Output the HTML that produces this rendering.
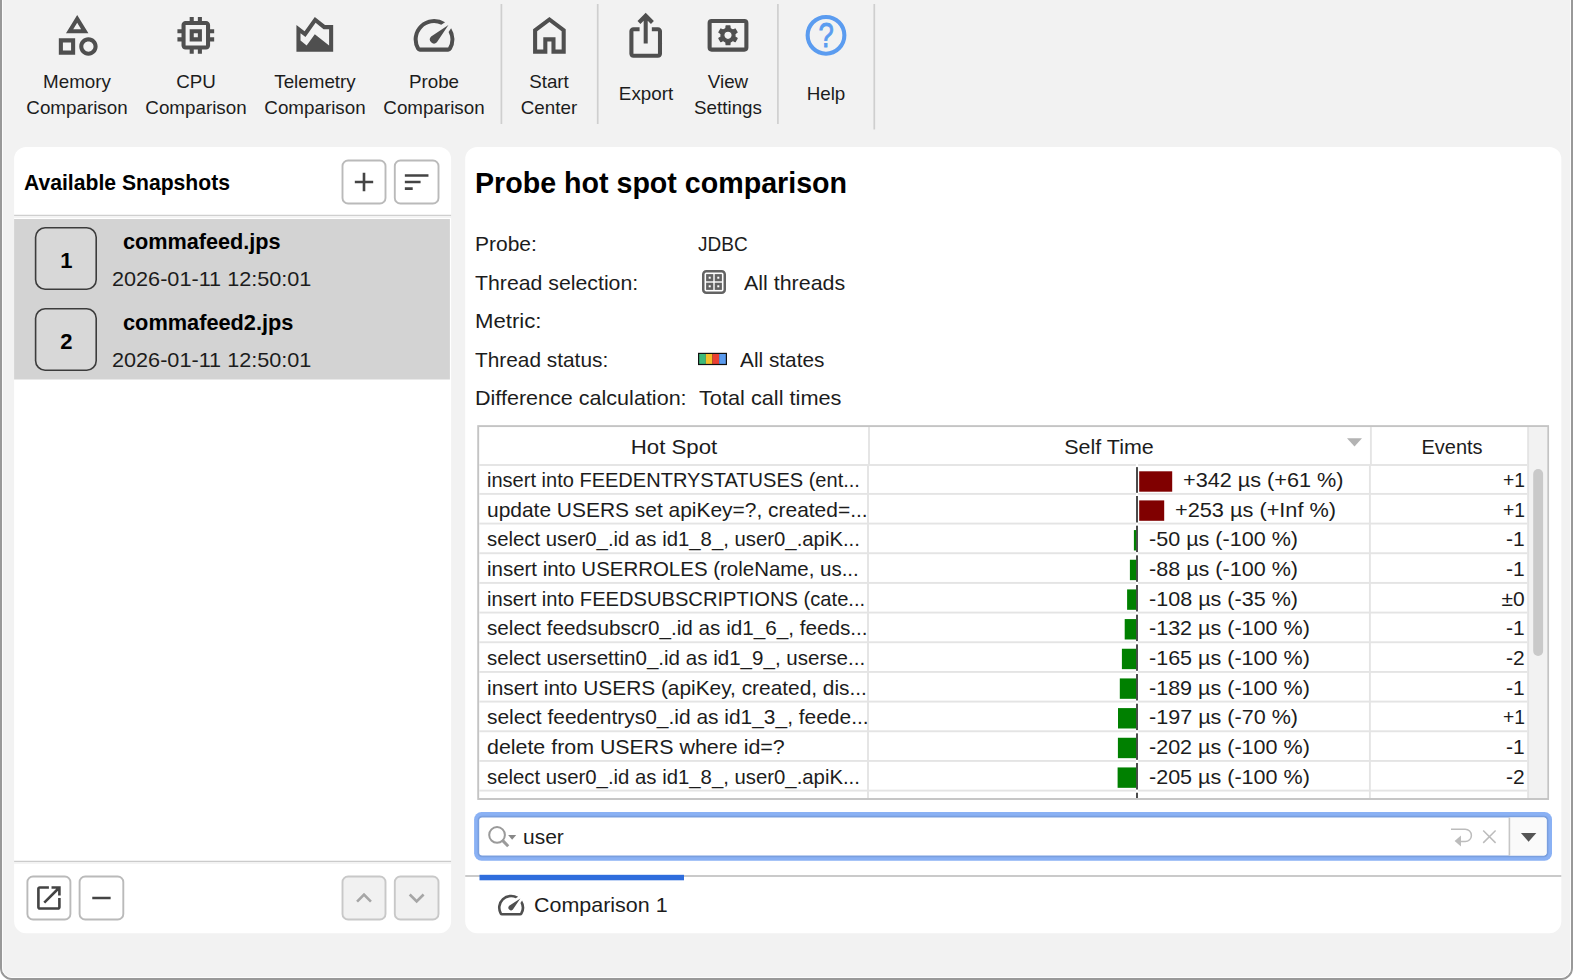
<!DOCTYPE html>
<html><head><meta charset="utf-8"><title>Probe hot spot comparison</title>
<style>
*{box-sizing:border-box;margin:0;padding:0}
html,body{width:1573px;height:980px;overflow:hidden;background:#fff}
body{font-family:"Liberation Sans",sans-serif;color:#1c1c1c;position:relative}
#g{position:absolute;left:0;top:0}
.t{position:absolute;white-space:nowrap;line-height:1}
</style></head><body>
<svg id="g" width="1573" height="980" viewBox="0 0 1573 980">
<rect x="1" y="-20" width="1571" height="999" rx="11" fill="#f2f2f2" stroke="#999" stroke-width="2"/>
<rect x="2.5" y="-20" width="1568" height="997.5" rx="9.5" fill="none" stroke="#fcfcfc" stroke-width="1"/>
<svg x="52.7" y="10.8" width="49" height="49" viewBox="0 0 24 24" fill="#4f4f4f" color="#4f4f4f"><path d="M12 2l-5.5 9h11L12 2zm0 3.84L13.93 9h-3.87L12 5.84zM17.5 13c-2.49 0-4.5 2.01-4.5 4.5s2.01 4.5 4.5 4.5 4.5-2.01 4.5-4.5-2.01-4.5-4.5-4.5zm0 7c-1.38 0-2.5-1.12-2.5-2.5s1.12-2.5 2.5-2.5 2.5 1.12 2.5 2.5-1.12 2.5-2.5 2.5zM3 21.5h8v-8H3v8zm2-6h4v4H5v-4z"/></svg>
<svg x="171.3" y="10.8" width="49" height="49" viewBox="0 0 24 24" fill="#4f4f4f" color="#4f4f4f"><path d="M15 9H9v6h6V9zm-2 4h-2v-2h2v2zm8-2V9h-2V7c0-1.1-.9-2-2-2h-2V3h-2v2h-2V3H9v2H7c-1.1 0-2 .9-2 2v2H3v2h2v2H3v2h2v2c0 1.1.9 2 2 2h2v2h2v-2h2v2h2v-2h2c1.1 0 2-.9 2-2v-2h2v-2h-2v-2h2zm-4 6H7V7h10v10z"/></svg>
<svg x="290.3" y="10.8" width="49" height="49" viewBox="0 0 24 24" fill="#4f4f4f" color="#4f4f4f"><path d="M17 7l-5-4-5 7-4-3v13h18V7h-4zm2 9.95l-7-5.45L8 17l-3-2.4V11l2.44 1.83 4.96-6.95L16.3 9H19v7.95z"/></svg>
<svg x="409.5" y="10.8" width="49" height="49" viewBox="0 0 24 24" fill="#4f4f4f" color="#4f4f4f"><path d="M20.38 8.57l-1.23 1.85a8 8 0 0 1-.22 7.58H5.07A8 8 0 0 1 15.58 6.85l1.85-1.23A10 10 0 0 0 3.35 19a2 2 0 0 0 1.72 1h13.85a2 2 0 0 0 1.74-1 10 10 0 0 0-.27-10.44zm-9.79 6.84a2 2 0 0 0 2.83 0l5.66-8.49-8.49 5.66a2 2 0 0 0 0 2.83z"/></svg>
<svg x="524.9" y="10.8" width="49" height="49" viewBox="0 0 24 24" fill="#4f4f4f" color="#4f4f4f"><path d="M6 19h3v-6h6v6h3v-9l-6-4.5L6 10v9zm-2 2V9l8-6 8 6v12h-7v-6h-2v6H4z"/></svg>
<svg x="621.2" y="10.8" width="49" height="49" viewBox="0 0 24 24" fill="#4f4f4f" color="#4f4f4f"><path d="M16 5l-1.42 1.42-1.59-1.59V16h-1.98V4.83L9.42 6.42 8 5l4-4 4 4zm4 5v11c0 1.1-.9 2-2 2H6c-1.11 0-2-.9-2-2V10c0-1.11.89-2 2-2h3v2H6v11h12V10h-3V8h3c1.1 0 2 .9 2 2z"/></svg>
<svg x="703.5" y="10.8" width="49" height="49" viewBox="0 0 24 24" fill="#4f4f4f" color="#4f4f4f"><path fill-rule="evenodd" d="M4 4h16a2 2 0 0 1 2 2v12a2 2 0 0 1-2 2H4a2 2 0 0 1-2-2V6a2 2 0 0 1 2-2zm0 2v12h16V6H4z"/><path fill-rule="evenodd" stroke="#4f4f4f" stroke-width=".6" stroke-linejoin="round" d="M13.03 8.66L12.93 7.39L11.07 7.39L10.97 8.66L9.62 9.43L8.48 8.89L7.54 10.51L8.59 11.22L8.59 12.78L7.54 13.49L8.48 15.11L9.62 14.57L10.97 15.34L11.07 16.61L12.93 16.61L13.03 15.34L14.38 14.57L15.52 15.11L16.46 13.49L15.41 12.78L15.41 11.22L16.46 10.51L15.52 8.89L14.38 9.43zM9.95 12a2.05 2.05 0 1 0 4.1 0a2.05 2.05 0 1 0 -4.1 0z"/></svg>
<svg x="801.5" y="10.8" width="49" height="49" viewBox="0 0 24 24" fill="#5b9cf0" color="#5b9cf0"><circle cx="12" cy="12" r="9" fill="none" stroke="currentColor" stroke-width="2"/><text x="12" y="17.85" text-anchor="middle" font-family="Liberation Sans, sans-serif" font-size="16.8" stroke="currentColor" stroke-width=".4" transform="translate(12.1 0) scale(.8 1) translate(-12 0)">?</text></svg>
<rect x="500.55" y="4" width="1.7" height="120" fill="#cfcfcf"/>
<rect x="596.85" y="4" width="1.7" height="120" fill="#cfcfcf"/>
<rect x="777.05" y="4" width="1.7" height="120" fill="#cfcfcf"/>
<rect x="873.45" y="4" width="1.7" height="125.5" fill="#cfcfcf"/>
<rect x="14.1" y="146.9" width="437" height="786.3" rx="12" fill="#fff"/>
<rect x="342.5" y="160.5" width="43" height="43" rx="5.6" fill="#fff" stroke="#bababa" stroke-width="1.9"/>
<svg x="348.25" y="166.25" width="31.5" height="31.5" viewBox="0 0 24 24" fill="#444" color="#444"><path d="M19 13h-6v6h-2v-6H5v-2h6V5h2v6h6v2z"/></svg>
<rect x="394.8" y="160.5" width="43.7" height="43" rx="5.6" fill="#fff" stroke="#bababa" stroke-width="1.9"/>
<svg x="400.9" y="166.25" width="31.5" height="31.5" viewBox="0 0 24 24" fill="#444" color="#444"><path d="M3 18h6v-2H3v2zM3 6v2h18V6H3zm0 7h12v-2H3v2z"/></svg>
<rect x="14.1" y="214.75" width="437" height="1.5" fill="#cfcfcf"/>
<rect x="14.1" y="216.3" width="437" height="1.7" fill="#f4f4f4"/>
<rect x="14.1" y="219" width="435.8" height="160.5" fill="#d3d3d3"/>
<rect x="35.6" y="227.8" width="60.6" height="61.4" rx="9.5" fill="#d8d8d8" stroke="#3c3c3c" stroke-width="1.6"/>
<rect x="35.6" y="308.8" width="60.6" height="61.4" rx="9.5" fill="#d8d8d8" stroke="#3c3c3c" stroke-width="1.6"/>
<rect x="14.1" y="860.75" width="437" height="1.5" fill="#cbcbcb"/>
<rect x="14.1" y="862.3" width="437" height="1.7" fill="#f4f4f4"/>
<rect x="27.4" y="876.5" width="43" height="43" rx="5.6" fill="#fff" stroke="#bababa" stroke-width="1.9"/>
<svg x="33.15" y="882.25" width="31.5" height="31.5" viewBox="0 0 24 24" fill="#444" color="#444"><path d="M19 19H5V5h7V3H5c-1.11 0-2 .9-2 2v14c0 1.1.89 2 2 2h14c1.1 0 2-.9 2-2v-7h-2v7zM14 3v2h3.59l-9.83 9.83 1.41 1.41L19 6.41V10h2V3h-7z"/></svg>
<rect x="79.6" y="876.5" width="43.7" height="43" rx="5.6" fill="#fff" stroke="#bababa" stroke-width="1.9"/>
<svg x="85.7" y="882.25" width="31.5" height="31.5" viewBox="0 0 24 24" fill="#444" color="#444"><path d="M19 13H5v-2h14v2z"/></svg>
<rect x="342.5" y="876.5" width="43" height="43" rx="5.6" fill="#f1f1f1" stroke="#c8c8c8" stroke-width="1.9"/>
<svg x="348.25" y="882.25" width="31.5" height="31.5" viewBox="0 0 24 24" fill="#a6a6a6" color="#a6a6a6"><path d="M12 8l-6 6 1.41 1.41L12 10.83l4.59 4.58L18 14z"/></svg>
<rect x="394.8" y="876.5" width="43.7" height="43" rx="5.6" fill="#f1f1f1" stroke="#c8c8c8" stroke-width="1.9"/>
<svg x="400.9" y="882.25" width="31.5" height="31.5" viewBox="0 0 24 24" fill="#a6a6a6" color="#a6a6a6"><path d="M16.59 8.59L12 13.17 7.41 8.59 6 10l6 6 6-6z"/></svg>
<rect x="465.2" y="146.9" width="1096.1" height="786.3" rx="12" fill="#fff"/>
<svg x="702" y="270" width="24" height="24" viewBox="0 0 24 24"><rect x="1.25" y="1.25" width="21.5" height="21.5" rx="3" fill="#fff" stroke="#636363" stroke-width="2.5"/><g fill="#636363"><rect x="4.1" y="4.1" width="7.2" height="7.2"/><rect x="12.7" y="4.1" width="7.2" height="7.2"/><rect x="4.1" y="12.7" width="7.2" height="7.2"/><rect x="12.7" y="12.7" width="7.2" height="7.2"/></g><g fill="#fff"><rect x="6.7" y="6.7" width="2" height="2"/><rect x="15.3" y="6.7" width="2" height="2"/><rect x="6.7" y="15.3" width="2" height="2"/><rect x="15.3" y="15.3" width="2" height="2"/></g></svg>
<rect x="698" y="352.8" width="29" height="12.3" fill="#111"/>
<rect x="699.2" y="354" width="6.65" height="9.9" fill="#3dba7a"/>
<rect x="705.85" y="354" width="6.65" height="9.9" fill="#f5be2a"/>
<rect x="712.5" y="354" width="6.65" height="9.9" fill="#ea3f33"/>
<rect x="719.15" y="354" width="6.65" height="9.9" fill="#5b9bee"/>
<rect x="478.2" y="426.1" width="1069.9" height="372.9" fill="#fff" stroke="#c4c4c4" stroke-width="1.9"/>
<rect x="1529" y="427" width="18.2" height="371" fill="#f2f2f2"/>
<rect x="1533.2" y="469.1" width="9.9" height="186.8" rx="4.95" fill="#c9c9c9"/>
<rect x="479.2" y="464.05" width="1048.1" height="1.9" fill="#e4e4e4"/>
<rect x="479.2" y="492.95" width="1048.1" height="1.9" fill="#e4e4e4"/>
<rect x="479.2" y="522.62" width="1048.1" height="1.9" fill="#e4e4e4"/>
<rect x="479.2" y="552.29" width="1048.1" height="1.9" fill="#e4e4e4"/>
<rect x="479.2" y="581.96" width="1048.1" height="1.9" fill="#e4e4e4"/>
<rect x="479.2" y="611.63" width="1048.1" height="1.9" fill="#e4e4e4"/>
<rect x="479.2" y="641.3" width="1048.1" height="1.9" fill="#e4e4e4"/>
<rect x="479.2" y="670.97" width="1048.1" height="1.9" fill="#e4e4e4"/>
<rect x="479.2" y="700.64" width="1048.1" height="1.9" fill="#e4e4e4"/>
<rect x="479.2" y="730.31" width="1048.1" height="1.9" fill="#e4e4e4"/>
<rect x="479.2" y="759.98" width="1048.1" height="1.9" fill="#e4e4e4"/>
<rect x="479.2" y="789.65" width="1048.1" height="1.9" fill="#e4e4e4"/>
<rect x="868.05" y="427" width="1.9" height="38" fill="#e4e4e4"/>
<rect x="867.05" y="465" width="1.9" height="333" fill="#e4e4e4"/>
<rect x="1369.95" y="427" width="1.9" height="38" fill="#e4e4e4"/>
<rect x="1368.95" y="465" width="1.9" height="333" fill="#e4e4e4"/>
<rect x="1527.15" y="427" width="1.9" height="38" fill="#e4e4e4"/>
<rect x="1527.15" y="465" width="1.9" height="333" fill="#e4e4e4"/>
<path d="M1347 438.2h15l-7.5 8.2z" fill="#b3b3b3"/>
<rect x="1135.9" y="463.9" width="2.2" height="3.2" fill="#fff"/>
<rect x="1136.1" y="467.1" width="1.8" height="26.3" fill="#383838"/>
<rect x="1135.9" y="492.8" width="2.2" height="3.2" fill="#fff"/>
<rect x="1136.1" y="496" width="1.8" height="27.07" fill="#383838"/>
<rect x="1135.9" y="522.47" width="2.2" height="3.2" fill="#fff"/>
<rect x="1136.1" y="525.67" width="1.8" height="27.07" fill="#383838"/>
<rect x="1135.9" y="552.14" width="2.2" height="3.2" fill="#fff"/>
<rect x="1136.1" y="555.34" width="1.8" height="27.07" fill="#383838"/>
<rect x="1135.9" y="581.81" width="2.2" height="3.2" fill="#fff"/>
<rect x="1136.1" y="585.01" width="1.8" height="27.07" fill="#383838"/>
<rect x="1135.9" y="611.48" width="2.2" height="3.2" fill="#fff"/>
<rect x="1136.1" y="614.68" width="1.8" height="27.07" fill="#383838"/>
<rect x="1135.9" y="641.15" width="2.2" height="3.2" fill="#fff"/>
<rect x="1136.1" y="644.35" width="1.8" height="27.07" fill="#383838"/>
<rect x="1135.9" y="670.82" width="2.2" height="3.2" fill="#fff"/>
<rect x="1136.1" y="674.02" width="1.8" height="27.07" fill="#383838"/>
<rect x="1135.9" y="700.49" width="2.2" height="3.2" fill="#fff"/>
<rect x="1136.1" y="703.69" width="1.8" height="27.07" fill="#383838"/>
<rect x="1135.9" y="730.16" width="2.2" height="3.2" fill="#fff"/>
<rect x="1136.1" y="733.36" width="1.8" height="27.07" fill="#383838"/>
<rect x="1135.9" y="759.83" width="2.2" height="3.2" fill="#fff"/>
<rect x="1136.1" y="763.03" width="1.8" height="27.07" fill="#383838"/>
<rect x="1135.9" y="789.5" width="2.2" height="3.2" fill="#fff"/>
<rect x="1136.1" y="792.7" width="1.8" height="5.3" fill="#383838"/>
<rect x="1139.2" y="471.3" width="33" height="20.4" fill="#800000"/>
<rect x="1139.2" y="500.4" width="25" height="20.4" fill="#800000"/>
<rect x="1133.9" y="530.07" width="2.2" height="20.4" fill="#008000"/>
<rect x="1129.9" y="559.74" width="6.2" height="20.4" fill="#008000"/>
<rect x="1127.1" y="589.41" width="9" height="20.4" fill="#008000"/>
<rect x="1124.7" y="619.08" width="11.4" height="20.4" fill="#008000"/>
<rect x="1121.9" y="648.75" width="14.2" height="20.4" fill="#008000"/>
<rect x="1119.8" y="678.42" width="16.3" height="20.4" fill="#008000"/>
<rect x="1118" y="708.09" width="18.1" height="20.4" fill="#008000"/>
<rect x="1117.9" y="737.76" width="18.2" height="20.4" fill="#008000"/>
<rect x="1117.6" y="767.43" width="18.5" height="20.4" fill="#008000"/>
<rect x="474.1" y="812.1" width="1077.9" height="48.7" rx="7.5" fill="#8ab1f4"/>
<rect x="477.6" y="815.8" width="1070.8" height="41.4" rx="4.5" fill="#7a9fde"/>
<rect x="479.2" y="817.4" width="1067.4" height="38.2" rx="3" fill="#fff"/>
<path d="M1509.4 817.4h34.2a3 3 0 0 1 3 3v32.2a3 3 0 0 1-3 3h-34.2z" fill="#fafafa"/>
<rect x="1508.6" y="817.4" width="1.6" height="38.2" fill="#c6c6c6"/>
<g fill="none"><circle cx="497.05" cy="834.95" r="7.85" stroke="#9a9a9a" stroke-width="2"/><path d="M502.5 840.4L508.2 846.3" stroke="#9a9a9a" stroke-width="3"/><path d="M508.1 835.1h8.1l-4.05 4.7z" fill="#888"/></g>
<g fill="none" stroke="#bcbcbc" stroke-width="1.500"><path d="M1451 829.200h14.200a6.200 6.200 0 0 1 0 12.400h-4.700"/><path d="M1483.200 830.500l12.400 12.400m0-12.400l-12.400 12.400"/></g><path d="M1454.600 841l6.400-5.500v11z" fill="#bcbcbc"/>
<path d="M1520.900 833h15.400l-7.700 8.800z" fill="#555"/>
<rect x="465.2" y="875.05" width="1096.1" height="1.9" fill="#c8c8c8"/>
<rect x="479.5" y="874.8" width="204.5" height="5.5" fill="#2f6ddd"/>
<svg x="495.3" y="889.35" width="31.5" height="31.5" viewBox="0 0 24 24" fill="#4f4f4f" color="#4f4f4f"><path d="M20.38 8.57l-1.23 1.85a8 8 0 0 1-.22 7.58H5.07A8 8 0 0 1 15.58 6.85l1.85-1.23A10 10 0 0 0 3.35 19a2 2 0 0 0 1.72 1h13.85a2 2 0 0 0 1.74-1 10 10 0 0 0-.27-10.44zm-9.79 6.84a2 2 0 0 0 2.83 0l5.66-8.49-8.49 5.66a2 2 0 0 0 0 2.83z"/></svg>
</svg>
<div class="t" style="left:-222.8px;width:600px;text-align:center;top:74px;font-size:17.9px;transform:scaleX(1.0500);transform-origin:center center">Memory</div>
<div class="t" style="left:-222.8px;width:600px;text-align:center;top:100px;font-size:17.9px;transform:scaleX(1.0500);transform-origin:center center">Comparison</div>
<div class="t" style="left:-104.2px;width:600px;text-align:center;top:74px;font-size:17.9px;transform:scaleX(1.0500);transform-origin:center center">CPU</div>
<div class="t" style="left:-104.2px;width:600px;text-align:center;top:100px;font-size:17.9px;transform:scaleX(1.0500);transform-origin:center center">Comparison</div>
<div class="t" style="left:14.8px;width:600px;text-align:center;top:74px;font-size:17.9px;transform:scaleX(1.0500);transform-origin:center center">Telemetry</div>
<div class="t" style="left:14.8px;width:600px;text-align:center;top:100px;font-size:17.9px;transform:scaleX(1.0500);transform-origin:center center">Comparison</div>
<div class="t" style="left:134px;width:600px;text-align:center;top:74px;font-size:17.9px;transform:scaleX(1.0500);transform-origin:center center">Probe</div>
<div class="t" style="left:134px;width:600px;text-align:center;top:100px;font-size:17.9px;transform:scaleX(1.0500);transform-origin:center center">Comparison</div>
<div class="t" style="left:249.4px;width:600px;text-align:center;top:74px;font-size:17.9px;transform:scaleX(1.0500);transform-origin:center center">Start</div>
<div class="t" style="left:249.4px;width:600px;text-align:center;top:100px;font-size:17.9px;transform:scaleX(1.0500);transform-origin:center center">Center</div>
<div class="t" style="left:345.7px;width:600px;text-align:center;top:86px;font-size:17.9px;transform:scaleX(1.0500);transform-origin:center center">Export</div>
<div class="t" style="left:428px;width:600px;text-align:center;top:74px;font-size:17.9px;transform:scaleX(1.0500);transform-origin:center center">View</div>
<div class="t" style="left:428px;width:600px;text-align:center;top:100px;font-size:17.9px;transform:scaleX(1.0500);transform-origin:center center">Settings</div>
<div class="t" style="left:526px;width:600px;text-align:center;top:86px;font-size:17.9px;transform:scaleX(1.0500);transform-origin:center center">Help</div>
<div class="t" style="left:23.5px;top:173px;font-size:21.5px;font-weight:bold;color:#000;transform:scaleX(0.9833);transform-origin:left center">Available Snapshots</div>
<div class="t" style="left:-233.6px;width:600px;text-align:center;top:250px;font-size:22px;font-weight:bold;color:#000">1</div>
<div class="t" style="left:123.4px;top:231px;font-size:22px;font-weight:bold;color:#000;transform:scaleX(0.9840);transform-origin:left center">commafeed.jps</div>
<div class="t" style="left:112.3px;top:268px;font-size:21px;transform:scaleX(1.0308);transform-origin:left center">2026-01-11 12:50:01</div>
<div class="t" style="left:-233.6px;width:600px;text-align:center;top:331px;font-size:22px;font-weight:bold;color:#000">2</div>
<div class="t" style="left:123.4px;top:312px;font-size:22px;font-weight:bold;color:#000;transform:scaleX(0.9884);transform-origin:left center">commafeed2.jps</div>
<div class="t" style="left:112.3px;top:349px;font-size:21px;transform:scaleX(1.0308);transform-origin:left center">2026-01-11 12:50:01</div>
<div class="t" style="left:475.2px;top:169px;font-size:29px;font-weight:bold;color:#000;transform:scaleX(0.9867);transform-origin:left center">Probe hot spot comparison</div>
<div class="t" style="left:474.6px;top:233px;font-size:21px;transform:scaleX(0.9988);transform-origin:left center">Probe:</div>
<div class="t" style="left:474.6px;top:272px;font-size:21px;transform:scaleX(1.0131);transform-origin:left center">Thread selection:</div>
<div class="t" style="left:474.6px;top:310px;font-size:21px;transform:scaleX(1.0556);transform-origin:left center">Metric:</div>
<div class="t" style="left:474.6px;top:349px;font-size:21px;transform:scaleX(0.9923);transform-origin:left center">Thread status:</div>
<div class="t" style="left:474.6px;top:387px;font-size:21px;transform:scaleX(1.0261);transform-origin:left center">Difference calculation:</div>
<div class="t" style="left:698.2px;top:233px;font-size:21px;transform:scaleX(0.9045);transform-origin:left center">JDBC</div>
<div class="t" style="left:744.4px;top:272px;font-size:21px;transform:scaleX(1.0200);transform-origin:left center">All threads</div>
<div class="t" style="left:740.4px;top:349px;font-size:21px;transform:scaleX(0.9906);transform-origin:left center">All states</div>
<div class="t" style="left:698.6px;top:387px;font-size:21px;transform:scaleX(1.0341);transform-origin:left center">Total call times</div>
<div class="t" style="left:374.3px;width:600px;text-align:center;top:436px;font-size:21px;transform:scaleX(1.0598);transform-origin:center center">Hot Spot</div>
<div class="t" style="left:808.8px;width:600px;text-align:center;top:436px;font-size:21px;transform:scaleX(1.0215);transform-origin:center center">Self Time</div>
<div class="t" style="left:1152.4px;width:600px;text-align:center;top:436px;font-size:21px;transform:scaleX(0.9533);transform-origin:center center">Events</div>
<div class="t" style="left:487.3px;top:469px;font-size:21px;transform:scaleX(0.9539);transform-origin:left center">insert into FEEDENTRYSTATUSES (ent...</div>
<div class="t" style="left:1182.8px;top:469px;font-size:21px;transform:scaleX(1.0309);transform-origin:left center">+342 µs (+61 %)</div>
<div class="t" style="right:48.4px;top:469px;font-size:21px;transform:scaleX(0.9189);transform-origin:right center">+1</div>
<div class="t" style="left:487.3px;top:499px;font-size:21px;transform:scaleX(0.9970);transform-origin:left center">update USERS set apiKey=?, created=...</div>
<div class="t" style="left:1174.7px;top:499px;font-size:21px;transform:scaleX(1.0348);transform-origin:left center">+253 µs (+Inf %)</div>
<div class="t" style="right:48.4px;top:499px;font-size:21px;transform:scaleX(0.9189);transform-origin:right center">+1</div>
<div class="t" style="left:487.3px;top:528px;font-size:21px;transform:scaleX(0.9680);transform-origin:left center">select user0_.id as id1_8_, user0_.apiK...</div>
<div class="t" style="left:1149px;top:528px;font-size:21px;transform:scaleX(1.0266);transform-origin:left center">-50 µs (-100 %)</div>
<div class="t" style="right:48.4px;top:528px;font-size:21px">-1</div>
<div class="t" style="left:487.3px;top:558px;font-size:21px;transform:scaleX(0.9740);transform-origin:left center">insert into USERROLES (roleName, us...</div>
<div class="t" style="left:1149px;top:558px;font-size:21px;transform:scaleX(1.0266);transform-origin:left center">-88 µs (-100 %)</div>
<div class="t" style="right:48.4px;top:558px;font-size:21px">-1</div>
<div class="t" style="left:487.3px;top:588px;font-size:21px;transform:scaleX(0.9586);transform-origin:left center">insert into FEEDSUBSCRIPTIONS (cate...</div>
<div class="t" style="left:1149px;top:588px;font-size:21px;transform:scaleX(1.0266);transform-origin:left center">-108 µs (-35 %)</div>
<div class="t" style="right:48.4px;top:588px;font-size:21px">±0</div>
<div class="t" style="left:487.3px;top:617px;font-size:21px;transform:scaleX(0.9850);transform-origin:left center">select feedsubscr0_.id as id1_6_, feeds...</div>
<div class="t" style="left:1149px;top:617px;font-size:21px;transform:scaleX(1.0254);transform-origin:left center">-132 µs (-100 %)</div>
<div class="t" style="right:48.4px;top:617px;font-size:21px">-1</div>
<div class="t" style="left:487.3px;top:647px;font-size:21px;transform:scaleX(0.9786);transform-origin:left center">select usersettin0_.id as id1_9_, userse...</div>
<div class="t" style="left:1149px;top:647px;font-size:21px;transform:scaleX(1.0254);transform-origin:left center">-165 µs (-100 %)</div>
<div class="t" style="right:48.4px;top:647px;font-size:21px">-2</div>
<div class="t" style="left:487.3px;top:677px;font-size:21px;transform:scaleX(0.9934);transform-origin:left center">insert into USERS (apiKey, created, dis...</div>
<div class="t" style="left:1149px;top:677px;font-size:21px;transform:scaleX(1.0254);transform-origin:left center">-189 µs (-100 %)</div>
<div class="t" style="right:48.4px;top:677px;font-size:21px">-1</div>
<div class="t" style="left:487.3px;top:706px;font-size:21px;transform:scaleX(0.9965);transform-origin:left center">select feedentrys0_.id as id1_3_, feede...</div>
<div class="t" style="left:1149px;top:706px;font-size:21px;transform:scaleX(1.0266);transform-origin:left center">-197 µs (-70 %)</div>
<div class="t" style="right:48.4px;top:706px;font-size:21px;transform:scaleX(0.9189);transform-origin:right center">+1</div>
<div class="t" style="left:487.3px;top:736px;font-size:21px;transform:scaleX(1.0182);transform-origin:left center">delete from USERS where id=?</div>
<div class="t" style="left:1149px;top:736px;font-size:21px;transform:scaleX(1.0254);transform-origin:left center">-202 µs (-100 %)</div>
<div class="t" style="right:48.4px;top:736px;font-size:21px">-1</div>
<div class="t" style="left:487.3px;top:766px;font-size:21px;transform:scaleX(0.9680);transform-origin:left center">select user0_.id as id1_8_, user0_.apiK...</div>
<div class="t" style="left:1149px;top:766px;font-size:21px;transform:scaleX(1.0254);transform-origin:left center">-205 µs (-100 %)</div>
<div class="t" style="right:48.4px;top:766px;font-size:21px">-2</div>
<div class="t" style="left:522.5px;top:826px;font-size:21px;transform:scaleX(0.9987);transform-origin:left center">user</div>
<div class="t" style="left:534.2px;top:894px;font-size:21px;transform:scaleX(1.0220);transform-origin:left center">Comparison 1</div>
</body></html>
